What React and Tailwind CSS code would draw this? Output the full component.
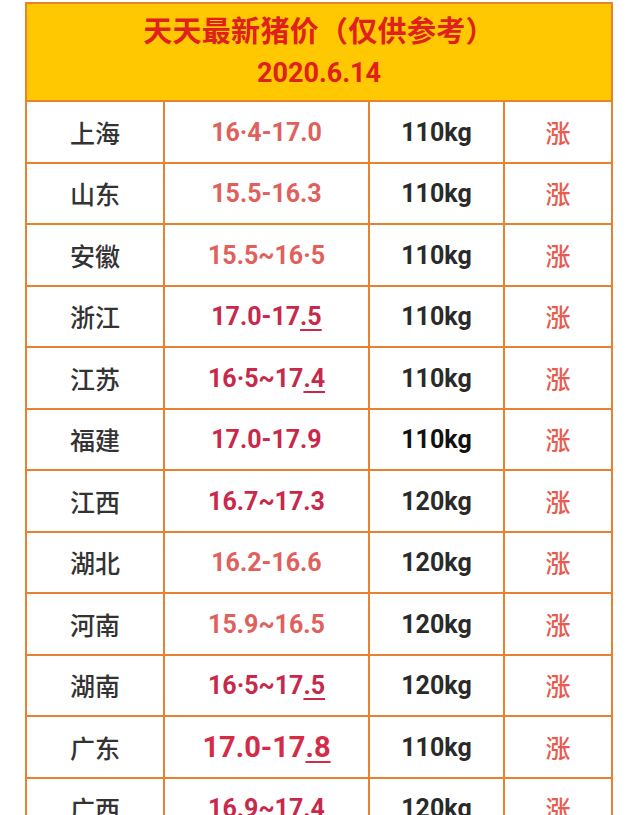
import React from "react";

const LIGHT = "text-[#e0605c]";
const DEEP = "text-[#c8284a]";

const rows = [
  { p: "上海", a: "16·4-17.0", u: "", c: LIGHT, w: "110kg" },
  { p: "山东", a: "15.5-16.3", u: "", c: LIGHT, w: "110kg" },
  { p: "安徽", a: "15.5~16·5", u: "", c: LIGHT, w: "110kg" },
  { p: "浙江", a: "17.0-17", u: ".5", c: DEEP, w: "110kg" },
  { p: "江苏", a: "16·5~17", u: ".4", c: DEEP, w: "110kg" },
  { p: "福建", a: "17.0-17.9", u: "", c: DEEP, w: "110kg", black: true },
  { p: "江西", a: "16.7~17.3", u: "", c: DEEP, w: "120kg" },
  { p: "湖北", a: "16.2-16.6", u: "", c: LIGHT, w: "120kg" },
  { p: "河南", a: "15.9~16.5", u: "", c: LIGHT, w: "120kg" },
  { p: "湖南", a: "16·5~17", u: ".5", c: DEEP, w: "120kg" },
  { p: "广东", a: "17.0-17", u: ".8", c: "text-[#d42c48]", w: "110kg", big: true },
  { p: "广西", a: "16.9~17.4", u: "", c: DEEP, w: "120kg" },
];

export default function App() {
  return (
    <div className="w-[640px] h-[815px] bg-white overflow-hidden pt-[2px] pl-[25px]">
      <div className="grid grid-cols-[136px_203px_133px_106px] gap-[2px] p-[2px] bg-[#e8822e] w-[588px]">
        <div className="col-span-4 h-[96px] bg-[#ffc800] flex flex-col items-center pt-[6px]">
          <div className="text-[29px] font-bold text-[#e0201c] leading-[38px] tracking-[0.3px] font-['Noto_Sans_CJK_SC','Noto_Sans',sans-serif]">
            天天最新猪价（仅供参考）
          </div>
          <div className="text-[27px] font-bold text-[#e0201c] leading-[34px] mt-[8px] font-['Roboto',sans-serif]">
            2020.6.14
          </div>
        </div>
        {rows.map((r, i) => (
          <React.Fragment key={i}>
            <div className="h-[59.5px] bg-white flex items-center justify-center pt-[1px] text-[25px] font-medium text-[#333333] font-['Noto_Sans_CJK_SC','Noto_Sans',sans-serif]">
              {r.p}
            </div>
            <div
              className={`h-[59.5px] bg-white flex items-center justify-center pt-[1px] font-bold font-['Roboto',sans-serif] ${r.big ? "text-[29px]" : "text-[25px]"} ${r.c}`}
            >
              <span>
                {r.a}
                {r.u && <span className="underline decoration-2 underline-offset-[4px]">{r.u}</span>}
              </span>
            </div>
            <div
              className={`h-[59.5px] bg-white flex items-center justify-center pt-[1px] text-[25px] font-bold font-['Roboto',sans-serif] ${r.black ? "text-[#111111]" : "text-[#2a2a2a]"}`}
            >
              {r.w}
            </div>
            <div className="h-[59.5px] bg-white flex items-center justify-center pt-[1px] text-[25px] font-medium text-[#e85c50] font-['Noto_Sans_CJK_SC','Noto_Sans',sans-serif]">
              涨
            </div>
          </React.Fragment>
        ))}
      </div>
    </div>
  );
}
